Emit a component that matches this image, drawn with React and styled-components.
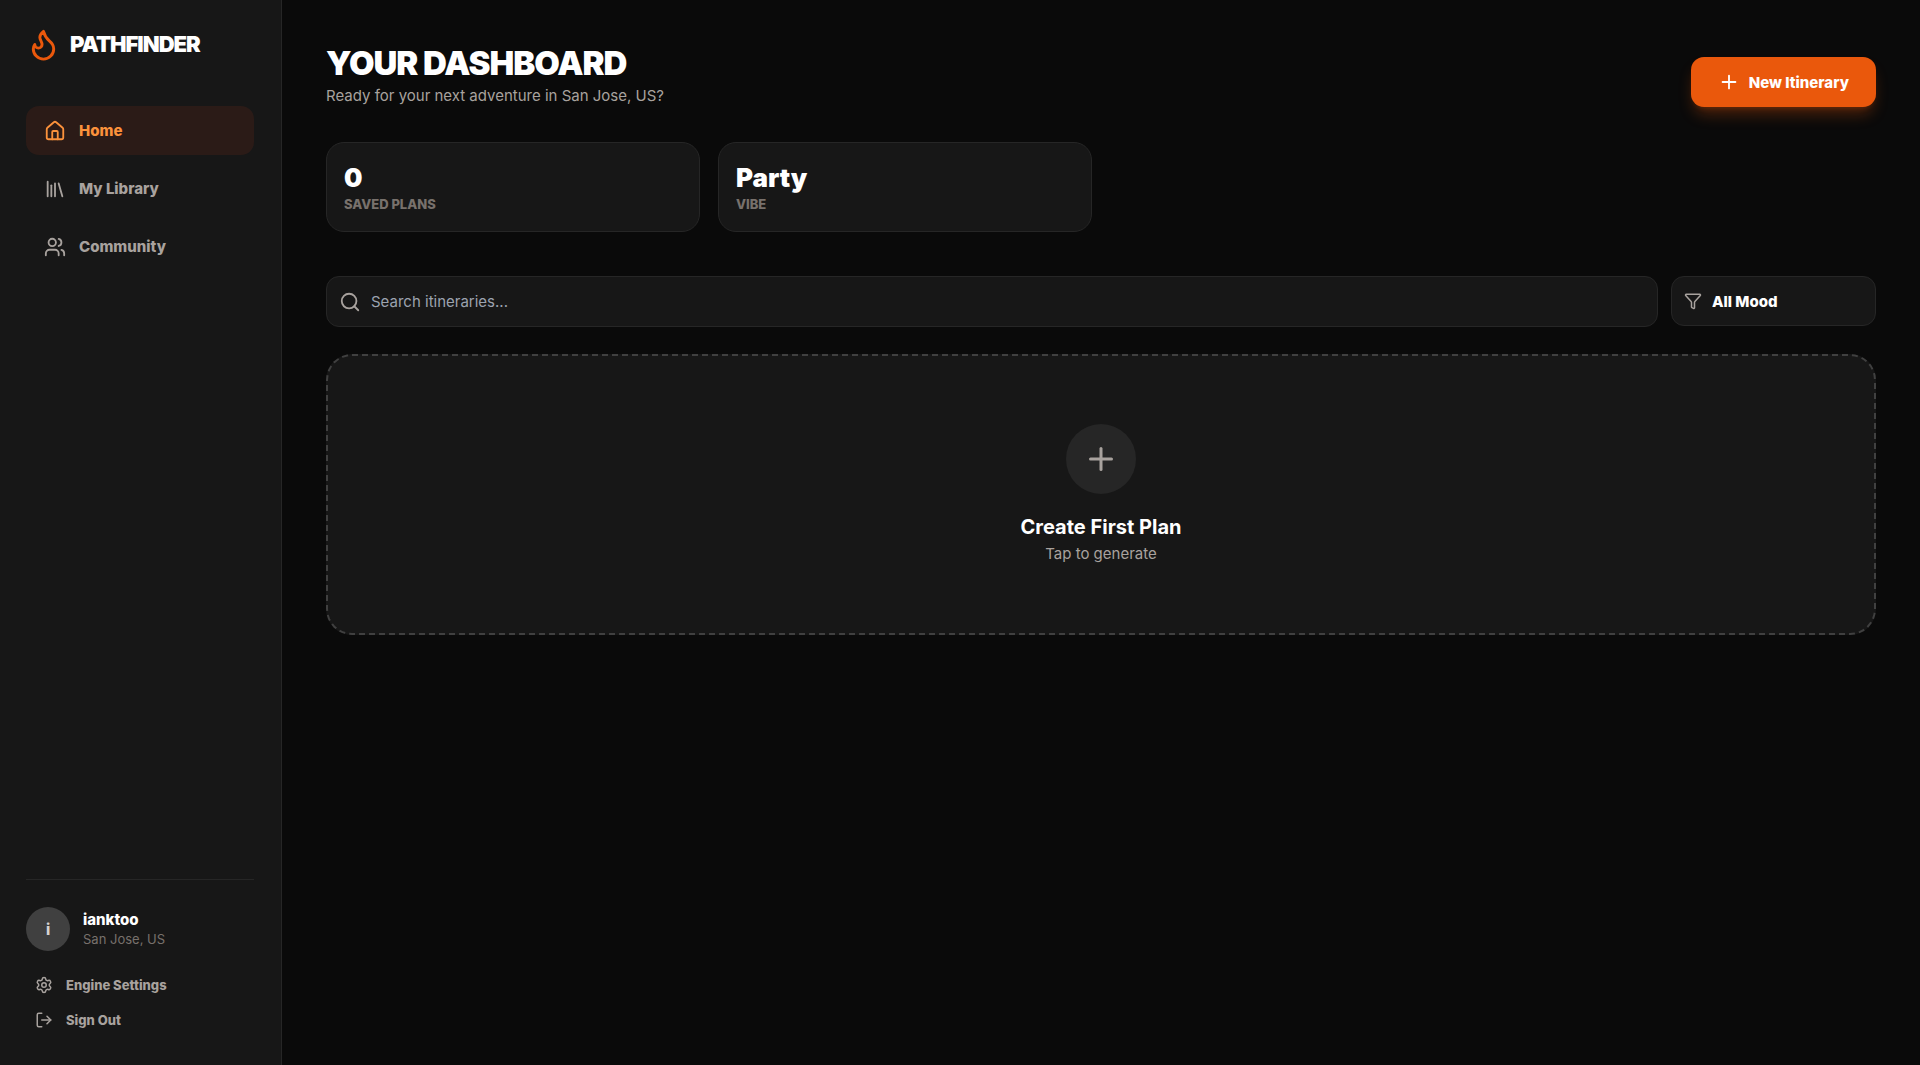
import React from 'react';
import styled, { createGlobalStyle } from 'styled-components';
import { Flame, House, Library, Users, Settings, LogOut, Plus, Search, Funnel } from 'lucide-react';

const GlobalStyle = createGlobalStyle`
  *, *::before, *::after { box-sizing: border-box; }
  body { margin: 0; background: #0a0a0a; color: #fff; font-family: Inter, "Liberation Sans", sans-serif; }
  h1, h2, p, dl, dt, dd, ul { margin: 0; padding: 0; }
  button, input, select { font-family: inherit; }
`;

const Shell = styled.div`
  display: flex;
  min-height: 100vh;
`;

const Sidebar = styled.aside`
  display: flex;
  flex-direction: column;
  flex: none;
  width: 282px;
  padding: 26px 27px 28px 26px;
  background: #171717;
  border-right: 1px solid #262626;
`;

const Brand = styled.div`
  display: flex;
  align-items: center;
  gap: 9px;
  height: 36px;
  color: #fff;
  font-size: 22px;
  font-weight: 900;
  letter-spacing: -1px;
  svg { color: #ea580c; }
`;

const Nav = styled.nav`
  display: flex;
  flex-direction: column;
  gap: 9px;
  margin-top: 44px;
`;

const NavLink = styled.a`
  display: flex;
  align-items: center;
  gap: 13px;
  height: 49px;
  padding: 0 18px;
  border-radius: 13px;
  background: ${(p) => (p.$active ? '#2b1b17' : 'transparent')};
  color: ${(p) => (p.$active ? '#fb923c' : '#a8a29e')};
  font-size: 15px;
  font-weight: 800;
  text-decoration: none;
`;

const Account = styled.div`
  margin-top: auto;
  padding-top: 27px;
  border-top: 1px solid #262626;
`;

const Profile = styled.div`
  display: flex;
  align-items: center;
  gap: 13px;
  margin-bottom: 16px;
`;

const Avatar = styled.div`
  display: grid;
  place-items: center;
  width: 44px;
  height: 44px;
  border-radius: 50%;
  background: #404040;
  color: #d6d3d1;
  font-size: 15px;
  font-weight: 800;
`;

const UserName = styled.p`
  font-size: 15px;
  line-height: 20px;
  font-weight: 800;
`;

const UserPlace = styled.p`
  color: #78716c;
  font-size: 13px;
  line-height: 18px;
`;

const AccountButton = styled.button`
  display: flex;
  align-items: center;
  gap: 13px;
  width: 100%;
  height: 35px;
  padding: 0 9px;
  border: 0;
  background: none;
  color: #a8a29e;
  font-size: 13px;
  font-weight: 800;
  cursor: pointer;
`;

const Main = styled.main`
  flex: 1;
  min-width: 0;
  padding: 44px;
`;

const Header = styled.header`
  display: flex;
  align-items: flex-end;
  justify-content: space-between;
  margin-bottom: 35px;
`;

const Heading = styled.div`
  display: grid;
  gap: 3px;
`;

const Title = styled.h1`
  font-size: 33px;
  line-height: 38px;
  font-weight: 900;
  letter-spacing: -1px;
`;

const Subtitle = styled.p`
  color: #a8a29e;
  font-size: 15px;
  line-height: 22px;
`;

const PrimaryButton = styled.button`
  display: flex;
  align-items: center;
  gap: 9px;
  height: 50px;
  padding: 0 27px;
  border: 0;
  border-radius: 13px;
  background: #ea580c;
  color: #fff;
  font-size: 15px;
  font-weight: 800;
  box-shadow: 0 10px 15px -3px rgba(234, 88, 12, 0.3), 0 4px 6px -4px rgba(234, 88, 12, 0.3);
  cursor: pointer;
`;

const Stats = styled.dl`
  display: grid;
  grid-template-columns: repeat(4, 1fr);
  gap: 18px;
  margin-bottom: 44px;
`;

const Stat = styled.div`
  display: flex;
  flex-direction: column-reverse;
  padding: 17px 17px 19px;
  border: 1px solid #262626;
  border-radius: 18px;
  background: #171717;
`;

const StatLabel = styled.dt`
  color: #78716c;
  font-size: 13px;
  line-height: 16px;
  font-weight: 800;
  text-transform: uppercase;
`;

const StatValue = styled.dd`
  font-size: 26px;
  line-height: 36px;
  font-weight: 900;
`;

const Filters = styled.div`
  display: flex;
  align-items: flex-start;
  gap: 13px;
  margin-bottom: 27px;
`;

const Field = styled.label`
  display: flex;
  align-items: center;
  flex: ${(p) => (p.$width ? 'none' : '1')};
  gap: 10px;
  width: ${(p) => p.$width || 'auto'};
  height: ${(p) => p.$height};
  padding: 0 12px;
  border: 1px solid #262626;
  border-radius: 13px;
  background: #171717;
  color: #a8a29e;
  svg { flex: none; }
`;

const SearchInput = styled.input`
  flex: 1;
  min-width: 0;
  padding: 0;
  border: 0;
  outline: 0;
  background: transparent;
  color: #fff;
  font-size: 15px;
  &::placeholder { color: #9ca3af; opacity: 1; }
`;

const MoodSelect = styled.select`
  flex: 1;
  min-width: 0;
  padding: 0;
  border: 0;
  outline: 0;
  appearance: none;
  background: #171717;
  color: #fff;
  font-size: 15px;
  font-weight: 800;
`;

const EmptyCard = styled.button`
  display: flex;
  flex-direction: column;
  align-items: center;
  width: 100%;
  padding: 68px 24px;
  border: 2px dashed #404040;
  border-radius: 26px;
  background: #171717;
  color: #fff;
  cursor: pointer;
`;

const PlusDisc = styled.span`
  display: grid;
  place-items: center;
  width: 70px;
  height: 70px;
  margin-bottom: 18px;
  border-radius: 50%;
  background: #262626;
  color: #a8a29e;
`;

const EmptyTitle = styled.span`
  font-size: 20px;
  line-height: 31px;
  font-weight: 700;
`;

const EmptyHint = styled.span`
  color: #a8a29e;
  font-size: 15px;
  line-height: 22px;
`;

const NAV = [
  { label: 'Home', Icon: House, active: true },
  { label: 'My Library', Icon: Library },
  { label: 'Community', Icon: Users },
];

const ACTIONS = [
  { label: 'Engine Settings', Icon: Settings },
  { label: 'Sign Out', Icon: LogOut },
];

const STATS = [
  { label: 'Saved Plans', value: '0' },
  { label: 'Vibe', value: 'Party' },
];

export default function App() {
  return (
    <Shell>
      <GlobalStyle />
      <Sidebar>
        <Brand>
          <Flame size={35} />
          <span>PATHFINDER</span>
        </Brand>
        <Nav>
          {NAV.map(({ label, Icon, active }) => (
            <NavLink key={label} href="#" $active={active}>
              <Icon size={22} />
              {label}
            </NavLink>
          ))}
        </Nav>
        <Account>
          <Profile>
            <Avatar>i</Avatar>
            <div>
              <UserName>ianktoo</UserName>
              <UserPlace>San Jose, US</UserPlace>
            </div>
          </Profile>
          {ACTIONS.map(({ label, Icon }) => (
            <AccountButton key={label} type="button">
              <Icon size={18} />
              {label}
            </AccountButton>
          ))}
        </Account>
      </Sidebar>
      <Main>
        <Header>
          <Heading>
            <Title>YOUR DASHBOARD</Title>
            <Subtitle>Ready for your next adventure in San Jose, US?</Subtitle>
          </Heading>
          <PrimaryButton type="button">
            <Plus size={22} />
            New Itinerary
          </PrimaryButton>
        </Header>
        <Stats>
          {STATS.map(({ label, value }) => (
            <Stat key={label}>
              <StatLabel>{label}</StatLabel>
              <StatValue>{value}</StatValue>
            </Stat>
          ))}
        </Stats>
        <Filters>
          <Field $height="51px">
            <Search size={22} />
            <SearchInput type="text" placeholder="Search itineraries..." aria-label="Search itineraries" />
          </Field>
          <Field $width="205px" $height="50px">
            <Funnel size={18} />
            <MoodSelect aria-label="Mood">
              <option>All Mood</option>
            </MoodSelect>
          </Field>
        </Filters>
        <EmptyCard type="button">
          <PlusDisc>
            <Plus size={36} />
          </PlusDisc>
          <EmptyTitle>Create First Plan</EmptyTitle>
          <EmptyHint>Tap to generate</EmptyHint>
        </EmptyCard>
      </Main>
    </Shell>
  );
}
